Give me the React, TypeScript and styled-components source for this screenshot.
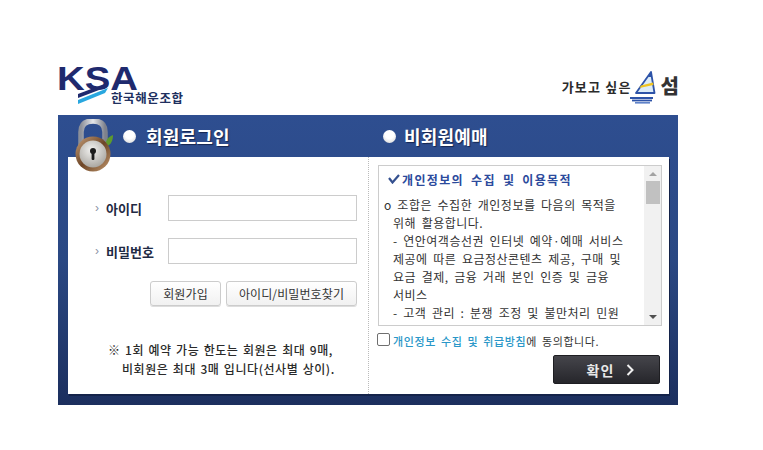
import React from 'react'
import styled, { createGlobalStyle } from 'styled-components'

const KR = `"Noto Sans CJK KR", "Noto Sans", sans-serif`

const GlobalStyle = createGlobalStyle`
  html, body {
    margin: 0;
    padding: 0;
    background: #fff;
    font-family: ${KR};
  }
`

const Page = styled.div`
  width: 621px;
  margin-left: 58px;
  padding-top: 64px;
`

const TopBar = styled.header`
  display: flex;
  justify-content: space-between;
  align-items: flex-start;
  height: 51px;
`

const Slogan = styled.div`
  display: flex;
  align-items: center;
  height: 44px;
  margin-top: 2px;
  color: #2b2b2b;
`

const SloganText = styled.span`
  font-size: 13px;
  font-weight: 700;
  letter-spacing: 1.2px;
  margin-right: -2px;
  margin-top: -4px;
`

const Island = styled.span`
  font-size: 20px;
  font-weight: 900;
  margin-left: 3px;
  margin-top: -4px;
  line-height: 1;
  color: #333;
`

const Panel = styled.section`
  position: relative;
  width: 620px;
  height: 290px;
  box-sizing: border-box;
  padding: 0 9px 11px 10px;
  background: linear-gradient(180deg, #2e4e90 0%, #2a4883 50%, #1c2f5e 100%);
`

const TitleRow = styled.div`
  display: grid;
  grid-template-columns: 300px 300px;
  height: 42px;
`

const PanelTitle = styled.h2<{ $inset: number; $gap: number }>`
  display: flex;
  align-items: center;
  gap: ${p => p.$gap}px;
  margin: 0;
  padding-left: ${p => p.$inset}px;
  color: #fff;
  font-size: 18px;
  font-weight: 700;
  letter-spacing: 0.2px;
  text-shadow: 1px 1px 1px #16264f;
`

const Bullet = styled.i`
  display: block;
  width: 13px;
  height: 13px;
  border-radius: 50%;
  background: radial-gradient(circle at 50% 35%, #fff 40%, #cfcfcf 100%);
`

const LockBadge = styled.div`
  position: absolute;
  left: 15px;
  top: 4px;
  width: 44px;
  height: 54px;
`

const Card = styled.div`
  display: grid;
  grid-template-columns: 301px 300px;
  height: 237px;
  background: #fff;
  box-shadow: 1px 2px 0 #14234a;
`

const LoginSide = styled.div`
  box-sizing: border-box;
  border-right: 1px dotted #bbb;
  padding: 38px 11px 0 27px;
`

const Field = styled.label`
  display: flex;
  align-items: center;
  height: 26px;
  margin-bottom: 17px;
`

const FieldLabel = styled.span`
  flex: 1;
  display: flex;
  align-items: center;
  gap: 7px;
  font-size: 13px;
  font-weight: 700;
  color: #1f2a44;
`

const Caret = styled.i`
  font-style: normal;
  font-weight: 400;
  font-size: 12px;
  color: #8a93a6;
  font-family: "Liberation Sans", sans-serif;
`

const TextInput = styled.input`
  width: 189px;
  height: 26px;
  box-sizing: border-box;
  border: 1px solid #ccc;
  background: #fff;
  outline: none;
`

const ButtonRow = styled.div`
  display: flex;
  justify-content: flex-end;
  gap: 5px;
`

const GhostButton = styled.button<{ $width: number }>`
  width: ${p => p.$width}px;
  height: 25px;
  padding: 0;
  border: 1px solid #ccc;
  border-radius: 3px;
  background: linear-gradient(180deg, #fff 0%, #f1f1f1 100%);
  box-shadow: 0 1px 0 #ddd;
  color: #333;
  font-family: ${KR};
  font-size: 12px;
  letter-spacing: 0.1px;
`

const Notice = styled.p`
  margin: 34px 0 0 13px;
  padding-left: 14px;
  text-indent: -14px;
  font-size: 12px;
  font-weight: 500;
  line-height: 19px;
  color: #2a2a2a;
  letter-spacing: 0.55px;
  word-spacing: 1.2px;
  white-space: nowrap;
`

const GuestSide = styled.div`
  padding: 8px 7px 0 8px;
`

const TermsBox = styled.div`
  display: flex;
  width: 284px;
  height: 161px;
  box-sizing: border-box;
  margin-left: 1px;
  border: 1px solid #ccc;
`

const TermsText = styled.div`
  flex: 1;
  overflow: hidden;
  padding: 4px 4px 0 14px;
  color: #333;
`

const TermsTitle = styled.h3`
  display: flex;
  align-items: center;
  gap: 2px;
  margin: 0 0 8px -5px;
  height: 18px;
  font-size: 12px;
  font-weight: 700;
  color: #2c4a9c;
  letter-spacing: 1.35px;
  word-spacing: 3px;
  white-space: nowrap;
`

const TermsBody = styled.p`
  margin: 0;
  font-size: 12px;
  line-height: 18px;
  letter-spacing: 0.5px;
  word-spacing: 2.4px;
  white-space: nowrap;
  text-indent: -9px;
`

const ScrollRail = styled.div`
  width: 17px;
  display: flex;
  flex-direction: column;
  align-items: center;
  background: #f1f1f1;
`

const ScrollArrow = styled.i<{ $down?: boolean }>`
  display: block;
  width: 0;
  height: 0;
  margin: ${p => (p.$down ? 'auto 0 6px' : '6px 0 5px')};
  border-left: 4px solid transparent;
  border-right: 4px solid transparent;
  border-${p => (p.$down ? 'top' : 'bottom')}: 4px solid ${p => (p.$down ? '#505050' : '#a3a3a3')};
`

const ScrollThumb = styled.i`
  display: block;
  width: 14px;
  height: 23px;
  background: #c1c1c1;
`

const Consent = styled.label`
  display: flex;
  align-items: center;
  gap: 3px;
  height: 16px;
  margin-top: 5px;
  font-size: 11px;
  letter-spacing: 0.6px;
  word-spacing: 2px;
  color: #333;
`

const ConsentBox = styled.input`
  width: 13px;
  height: 13px;
  margin: 0;
  appearance: none;
  border: 1px solid #6f6f6f;
  border-radius: 2px;
  background: #fff;
`

const ConsentCopy = styled.span`
  margin-top: 3px;
`

const ConsentLink = styled.span`
  color: #2a97c8;
  font-weight: 500;
`

const ConfirmRow = styled.div`
  display: flex;
  justify-content: flex-end;
  margin: 8px 2px 0 0;
`

const ConfirmButton = styled.button`
  display: flex;
  align-items: center;
  justify-content: center;
  gap: 12px;
  width: 107px;
  height: 29px;
  padding: 0 0 0 8px;
  border: 1px solid #1e1e22;
  border-radius: 2px;
  background: linear-gradient(180deg, #45454b 0%, #26262b 100%);
  color: #e8e8e8;
  font-family: ${KR};
  font-size: 14px;
  font-weight: 700;
  letter-spacing: 1px;
`

const KsaLogo = () => (
  <svg width="126" height="50" viewBox="0 -6 126 50" style={{ marginTop: -6 }}>
    <text
      x="-1"
      y="26"
      fontFamily="Liberation Sans, sans-serif"
      fontWeight="700"
      fontSize="33"
      textLength="81"
      lengthAdjust="spacingAndGlyphs"
      fill="#1f2a6e"
    >
      KSA
    </text>
    <polygon points="20,30 49,19 49,23 20,34" fill="#1f2a6e" />
    <polygon points="20,36 50,24 47,29 20,40" fill="#29a7df" />
    <text x="53" y="39" fontFamily={KR} fontWeight="700" fontSize="12.5" textLength="72" fill="#20305f">
      한국해운조합
    </text>
  </svg>
)

const SailLogo = () => (
  <svg width="28" height="34" viewBox="0 0 28 34">
    <path d="M21 1 L6 22 L24.5 22 Z" fill="#dcecf8" stroke="#2d53a8" strokeWidth="1.8" strokeLinejoin="round" />
    <path d="M21 1 L18 6 L22 6 Z" fill="#2d53a8" />
    <path d="M11 14.5 L23 11.5 L23.5 14 L9.5 17 Z" fill="#f0c420" />
    <rect x="0" y="26" width="23" height="2" fill="#2d53a8" />
    <rect x="2" y="28.6" width="20" height="1.8" fill="#2d53a8" />
    <rect x="5" y="31" width="15" height="1.6" fill="#5f82c8" />
  </svg>
)

const LockIcon = () => (
  <svg width="44" height="54" viewBox="0 0 44 54">
    <defs>
      <linearGradient id="shackle" x1="0" x2="1" y1="0" y2="0">
        <stop offset="0" stopColor="#8b8f99" />
        <stop offset="0.5" stopColor="#e4e6ea" />
        <stop offset="1" stopColor="#7d818c" />
      </linearGradient>
      <radialGradient id="face" cx="0.45" cy="0.35" r="0.7">
        <stop offset="0" stopColor="#f2f2f0" />
        <stop offset="1" stopColor="#a5a29c" />
      </radialGradient>
      <linearGradient id="rim" x1="0" x2="1" y1="0" y2="1">
        <stop offset="0" stopColor="#c9a27c" />
        <stop offset="0.5" stopColor="#6d4526" />
        <stop offset="1" stopColor="#c39a70" />
      </linearGradient>
    </defs>
    <path d="M8 30 V13 C8 5 13 2 20 2 C27 2 32 5 32 13 V30" fill="none" stroke="url(#shackle)" strokeWidth="5.5" />
    <path d="M33 23 C34 19 37 17 40 16 C40 21 38 26 34 27 Z" fill="#5e9b2c" />
    <circle cx="20" cy="35" r="17.5" fill="url(#rim)" />
    <circle cx="20" cy="35" r="13.5" fill="url(#face)" />
    <circle cx="20" cy="32" r="3" fill="#1c1c1c" />
    <rect x="18.6" y="32" width="2.8" height="9" rx="1" fill="#1c1c1c" />
  </svg>
)

const Chevron = () => (
  <svg width="8" height="12" viewBox="0 0 8 12">
    <path d="M1.5 1 L6.5 6 L1.5 11" fill="none" stroke="#f0f0f0" strokeWidth="2" />
  </svg>
)

const Check = () => (
  <svg width="12" height="10" viewBox="0 0 12 10">
    <path d="M1 4 L4.5 8.5 L11 1" fill="none" stroke="#34508f" strokeWidth="2.2" />
  </svg>
)

const terms = [
  'o 조합은 수집한 개인정보를 다음의 목적을',
  '위해 활용합니다.',
  '- 연안여객승선권 인터넷 예약·예매 서비스',
  '제공에 따른 요금정산콘텐츠 제공, 구매 및',
  '요금 결제, 금융 거래 본인 인증 및 금융',
  '서비스',
  '- 고객 관리 : 분쟁 조정 및 불만처리 민원',
  '처리 및 고지사항 전달',
]

export default function App() {
  return (
    <Page>
      <GlobalStyle />
      <TopBar>
        <KsaLogo />
        <Slogan>
          <SloganText>가보고 싶은</SloganText>
          <SailLogo />
          <Island>섬</Island>
        </Slogan>
      </TopBar>
      <Panel>
        <LockBadge>
          <LockIcon />
        </LockBadge>
        <TitleRow>
          <PanelTitle $inset={55} $gap={10}>
            <Bullet />
            회원로그인
          </PanelTitle>
          <PanelTitle $inset={15} $gap={8}>
            <Bullet />
            비회원예매
          </PanelTitle>
        </TitleRow>
        <Card>
          <LoginSide>
            <Field>
              <FieldLabel>
                <Caret>›</Caret>아이디
              </FieldLabel>
              <TextInput type="text" />
            </Field>
            <Field>
              <FieldLabel>
                <Caret>›</Caret>비밀번호
              </FieldLabel>
              <TextInput type="password" />
            </Field>
            <ButtonRow>
              <GhostButton $width={71}>회원가입</GhostButton>
              <GhostButton $width={131}>아이디/비밀번호찾기</GhostButton>
            </ButtonRow>
            <Notice>
              ※ 1회 예약 가능 한도는 회원은 최대 9매,
              <br />
              비회원은 최대 3매 입니다(선사별 상이).
            </Notice>
          </LoginSide>
          <GuestSide>
            <TermsBox>
              <TermsText>
                <TermsTitle>
                  <Check />
                  개인정보의 수집 및 이용목적
                </TermsTitle>
                <TermsBody>
                  {terms.map(line => (
                    <React.Fragment key={line}>
                      {line}
                      <br />
                    </React.Fragment>
                  ))}
                </TermsBody>
              </TermsText>
              <ScrollRail>
                <ScrollArrow />
                <ScrollThumb />
                <ScrollArrow $down />
              </ScrollRail>
            </TermsBox>
            <Consent>
              <ConsentBox type="checkbox" />
              <ConsentCopy>
                <ConsentLink>개인정보 수집 및 취급방침</ConsentLink>에 동의합니다.
              </ConsentCopy>
            </Consent>
            <ConfirmRow>
              <ConfirmButton>
                확인
                <Chevron />
              </ConfirmButton>
            </ConfirmRow>
          </GuestSide>
        </Card>
      </Panel>
    </Page>
  )
}
